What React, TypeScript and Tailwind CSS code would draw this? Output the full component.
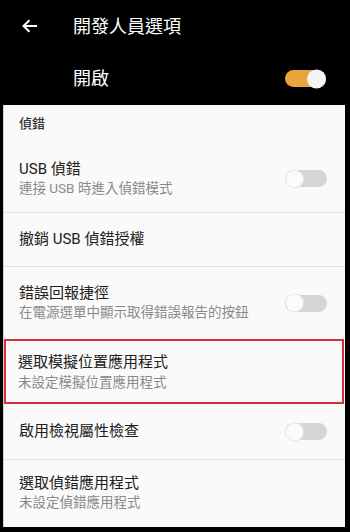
import React from 'react'

const font = { fontFamily: 'Roboto, "Noto Sans CJK TC", sans-serif' }

const Toggle: React.FC<{ on?: boolean }> = ({ on }) =>
  on ? (
    <div className="relative h-[17px] w-[41px] rounded-full bg-[#e9a43d]">
      <div className="absolute right-0 top-1/2 h-[19px] w-[19px] -translate-y-1/2 rounded-full bg-[#f5f5f5]" />
    </div>
  ) : (
    <div className="relative h-[17px] w-[42px] rounded-full bg-[#d5d5d5]">
      <div className="absolute left-0 top-1/2 h-[19px] w-[19px] -translate-y-1/2 rounded-full border border-[#e6e6e6] bg-[#fbfbfb]" />
    </div>
  )

const Row: React.FC<{
  title: string
  sub?: string
  toggle?: boolean
  className: string
}> = ({ title, sub, toggle, className }) => (
  <div className={`flex items-center justify-between pl-[15px] pr-[18px] ${className}`}>
    <div className="flex flex-col">
      <span className="text-[15px] leading-[19px] text-[#212121]">{title}</span>
      {sub && <span className="text-[13.5px] leading-[19px] text-[#8a8a8a]">{sub}</span>}
    </div>
    {toggle && <Toggle />}
  </div>
)

export default function App() {
  return (
    <div className="h-[532px] w-[350px] overflow-hidden bg-black" style={font}>
      <header className="flex h-[105px] flex-col">
        <div className="flex h-[52px] items-center">
          <svg className="ml-[22px] mr-[36px]" width="15" height="14" viewBox="0 0 15 14" fill="none" stroke="white" strokeWidth="2">
            <path d="M15 7H2M7.5 1.2L1.5 7l6 5.8" />
          </svg>
          <span className="text-[18px] text-white">開發人員選項</span>
        </div>
        <div className="flex h-[53px] items-center justify-between pl-[73px] pr-[24px]">
          <span className="text-[18px] text-white">開啟</span>
          <Toggle on />
        </div>
      </header>
      <main className="ml-[3px] mr-[5px] flex h-[422px] flex-col border-l border-[#cfcfcf] bg-[#fafafa]">
        <div className="flex h-[40px] items-center pl-[15px] pb-[2px]">
          <span className="text-[13px] font-medium text-[#333]">偵錯</span>
        </div>
        <Row className="h-[68px] border-b border-[#e3e3e3]" title="USB 偵錯" sub="連接 USB 時進入偵錯模式" toggle />
        <Row className="h-[54px] border-b border-[#e3e3e3]" title="撤銷 USB 偵錯授權" />
        <Row className="h-[72px]" title="錯誤回報捷徑" sub="在電源選單中顯示取得錯誤報告的按鈕" toggle />
        <div className="mr-[1px] flex h-[65px] items-center border-2 border-[#d4303a] pl-[12px]">
          <div className="flex flex-col">
            <span className="text-[15px] leading-[22px] text-[#212121]">選取模擬位置應用程式</span>
            <span className="text-[13.5px] leading-[19px] text-[#8a8a8a]">未設定模擬位置應用程式</span>
          </div>
        </div>
        <Row className="h-[56px] border-b border-[#e3e3e3]" title="啟用檢視屬性檢查" toggle />
        <Row className="flex-1 pb-[2px]" title="選取偵錯應用程式" sub="未設定偵錯應用程式" />
      </main>
    </div>
  )
}
